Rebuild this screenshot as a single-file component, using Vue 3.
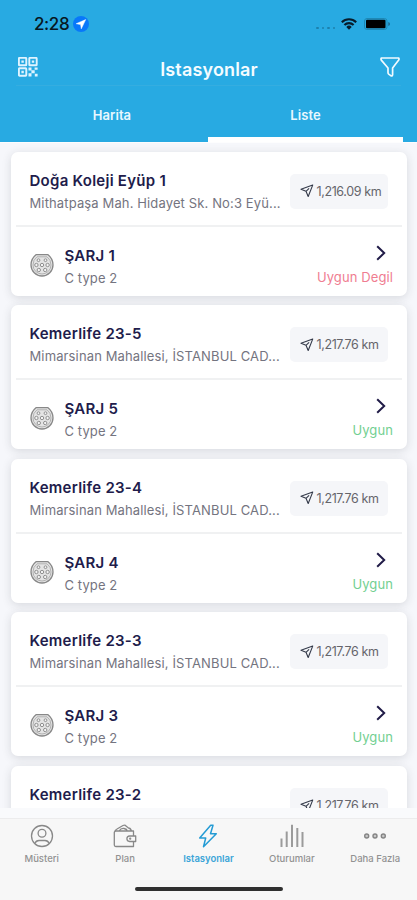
<script setup>
const stations = [
  { name: 'Doğa Koleji Eyüp 1', address: 'Mithatpaşa Mah. Hidayet Sk. No:3 Eyü...', km: '1,216.09 km', unit: 'ŞARJ 1', free: false },
  { name: 'Kemerlife 23-5', address: 'Mimarsinan Mahallesi, İSTANBUL CAD...', km: '1,217.76 km', unit: 'ŞARJ 5', free: true },
  { name: 'Kemerlife 23-4', address: 'Mimarsinan Mahallesi, İSTANBUL CAD...', km: '1,217.76 km', unit: 'ŞARJ 4', free: true },
  { name: 'Kemerlife 23-3', address: 'Mimarsinan Mahallesi, İSTANBUL CAD...', km: '1,217.76 km', unit: 'ŞARJ 3', free: true },
  { name: 'Kemerlife 23-2', km: '1,217.76 km', free: true },
]
</script>

<template>
  <div class="screen">
    <header class="header">
      <div class="status">
        <span class="time">2:28</span>
        <svg class="loc" viewBox="0 0 16 16"><circle cx="8" cy="8" r="8" fill="#0878fa" /><path d="M12.7 3.6 3.2 7.7l4.4.9.7 4.2z" fill="#fff" stroke="#fff" stroke-width=".5" stroke-linejoin="round" /></svg>
        <span class="dots"><i></i><i></i><i></i><i></i></span>
        <svg class="wifi" viewBox="0 0 16 12"><g fill="none" stroke="#071c2b" stroke-width="2.1"><path d="M.8 4.2a10.3 10.3 0 0 1 14.4 0" /><path d="M3.4 7a6.5 6.5 0 0 1 9.2 0" /></g><path d="M5.3 8.9a3.9 3.9 0 0 1 5.4 0L8 11.7z" fill="#071c2b" /></svg>
        <svg class="battery" viewBox="0 0 27 12"><rect x=".5" y=".5" width="22.5" height="11" rx="2.5" fill="none" stroke="#1e88b5" /><rect x="2" y="1.8" width="19.5" height="8.4" rx="1" fill="#000" /><path d="M24.4 4v4q1.5-.6 1.5-2t-1.500-2" fill="#1a6186" /></svg>
      </div>
      <div class="titlebar">
        <svg class="qr" viewBox="0 0 20 20">
          <g fill="none" stroke="#dff4ff" stroke-width="1.9"><rect x=".9" y=".9" width="7.4" height="7.4" rx=".6" /><rect x="11.300" y=".9" width="7.400" height="7.400" rx=".6" /><rect x=".9" y="11.300" width="7.400" height="7.400" rx=".6" /></g>
          <path fill="#dff4ff" d="M3.4 3.4h2.4v2.4H3.4zM13.8 3.4h2.4v2.4h-2.4zM3.4 13.8h2.4v2.4H3.4zM10.5 10.500h3v3h-3zM16.600 10.500h3v2.300h-3zM13.400 13.300h3.300v3h-3.300zM10.500 16.200h3v3.400h-3zM16.800 16.800h2.800v2.800h-2.800z" />
        </svg>
        <h1>Istasyonlar</h1>
        <svg class="filter" viewBox="0 0 20 20"><path d="M1.500 1h17q.9.8.2 2.100L12.600 11v6.600q-.2 1.700-1.500 1.300l-2.400-1.800q-.7-.6-.7-1.700V11L1.300 3.100Q.6 1.800 1.500 1z" fill="none" stroke="#f1faff" stroke-width="1.700" stroke-linejoin="round" /></svg>
      </div>
      <nav class="tabs">
        <div class="tab">Harita</div>
        <div class="tab on">Liste</div>
      </nav>
    </header>

    <main class="list">
      <article v-for="s in stations" :key="s.name" class="card">
        <div class="top">
          <div class="info">
            <div class="name">{{ s.name }}</div>
            <div v-if="s.address" class="address">{{ s.address }}</div>
          </div>
          <div class="distance">
            <svg viewBox="0 0 14 14"><path d="M12.700 1.100 1 5.200l5 2.100 2.200 5.200zM6 7.300l3.100-3" fill="none" stroke="#343a4a" stroke-width="1.100" stroke-linejoin="round" /></svg>
            <span>{{ s.km }}</span>
          </div>
        </div>
        <div v-if="s.unit" class="bottom">
          <svg class="plug" viewBox="0 0 24 24">
            <path d="M6 1.700h12Q23 5.500 23 12a11 11 0 0 1-22 0Q1 5.500 6 1.700z" fill="#e4e4e4" stroke="#888" stroke-width="1.300" />
            <path d="M7 3.800h10q4 3 4 8.200a9 9 0 0 1-18 0q0-5.200 4-8.200z" fill="none" stroke="#a5a5a5" stroke-width=".8" />
            <g fill="#f4f4f4" stroke="#909090" stroke-width="1"><circle cx="8.500" cy="7.200" r="1.400" /><circle cx="15.500" cy="7.200" r="1.400" /><circle cx="6.400" cy="12" r="1.700" /><circle cx="12" cy="12" r="1.700" /><circle cx="17.600" cy="12" r="1.700" /><circle cx="8.800" cy="17" r="1.700" /><circle cx="15.200" cy="17" r="1.700" /></g>
          </svg>
          <div class="unit">
            <div class="name">{{ s.unit }}</div>
            <div class="type">C type 2</div>
          </div>
          <div class="state">
            <svg viewBox="0 0 10 16"><path d="m1.200 1.200 7 6.800-7 6.800" fill="none" stroke="#211c48" stroke-width="2" /></svg>
            <span :class="s.free ? 'ok' : 'busy'">{{ s.free ? 'Uygun' : 'Uygun Degil' }}</span>
          </div>
        </div>
      </article>
    </main>

    <footer class="footer">
      <nav class="menu">
        <div class="item">
          <svg viewBox="0 0 24 24"><g fill="none" stroke="#888" stroke-width="1.300"><circle cx="12" cy="12" r="10.500" /><circle cx="12" cy="9.200" r="3.900" /><path d="M4.800 19.500q1.200-3 4.200-3h6q3 0 4.200 3" /></g></svg>
          <span>Müsteri</span>
        </div>
        <div class="item">
          <svg viewBox="0 0 24 24"><g fill="none" stroke="#888" stroke-width="1.300" stroke-linejoin="round"><path d="M20.500 12V7H3Q1.300 7 1.300 8.500v12.500q0 1.500 1.500 1.500h17.700v-5M1.500 8Q2 6 4 5l6-3.500q2-1 3.300.8L15.500 4q2 0 3 3M6 7q2-3 5-2.500t3 2.500" /><path d="M22.700 12h-6q-2.800.2-2.800 2.700t2.800 2.800h6z" /><circle cx="17.200" cy="14.700" r=".5" /></g></svg>
          <span>Plan</span>
        </div>
        <div class="item active">
          <svg viewBox="0 0 24 24"><path d="M14.700 1.200 3.700 14h6L7.500 22.700 20.300 9.800h-5.800l2.500-8.600z" fill="none" stroke="#249bd4" stroke-width="1.500" stroke-linejoin="round" /></svg>
          <span>Istasyonlar</span>
        </div>
        <div class="item">
          <svg viewBox="0 0 24 24"><path d="M1.500 14.500v8.500M6.700 7.500V23M12 .8V23M17.300 4V23M22.500 8v15" fill="none" stroke="#9b9b9b" stroke-width="2" /></svg>
          <span>Oturumlar</span>
        </div>
        <div class="item">
          <svg viewBox="0 0 24 24"><g fill="#c8c8c8" stroke="#858585" stroke-width="1.400"><circle cx="3.700" cy="12" r="2" /><circle cx="12" cy="12" r="2" /><circle cx="20.300" cy="12" r="2" /></g></svg>
          <span>Daha Fazla</span>
        </div>
      </nav>
      <div class="home"></div>
    </footer>
  </div>
</template>

<style>
body { margin: 0; overflow: hidden; }
</style>

<style scoped>
* { box-sizing: border-box; }
.screen { width: 417px; height: 900px; display: flex; flex-direction: column; overflow: hidden; background: #f5f6fa; font-family: Inter, "Noto Sans", sans-serif; }
svg { display: block; flex: none; }
.header { flex: none; height: 142px; background: #28aae2; display: flex; flex-direction: column; }
.status { height: 48px; padding: 0 26px 0 34px; display: flex; align-items: center; }
.time { font-size: 17px; line-height: 20px; font-weight: 500; color: #071722; width: 39px; letter-spacing: -.4px; }
.loc { width: 16px; height: 16px; }
.dots { display: flex; gap: 3px; margin: 8px 6px 0 auto; }
.dots i { width: 2.500px; height: 2.500px; border-radius: 50%; background: #1c80ad; }
.wifi { width: 16px; height: 12px; margin-right: 7px; }
.battery { width: 27px; height: 12px; }
.titlebar { height: 38px; margin: 0 16px; padding: 0 1px 0 2px; border-bottom: 1px solid #35ade0; display: flex; align-items: center; justify-content: space-between; }
.qr { width: 20px; height: 20px; }
.filter { width: 20px; height: 20px; }
h1 { margin: 6px 0 0; font-size: 18px; line-height: 24px; font-weight: 600; letter-spacing: .15px; color: #f5fcff; }
.tabs { height: 56px; padding: 0 14px 0 16px; display: grid; grid-template-columns: 192px 195px; }
.tab { height: 56px; padding-top: 20px; text-align: center; color: #e9f8ff; font-size: 13px; line-height: 18px; font-weight: 600; letter-spacing: .05px; }
.tab.on { border-bottom: 5px solid #fff; }
.list { flex: none; height: 666px; overflow: hidden; padding: 9.700px 10px 0 10.500px; display: flex; flex-direction: column; gap: 9.600px; background: #f6f7fb; border-top: 1px solid #fdfdfe; padding-top: 8.700px; }
.card { flex: none; height: 144px; background: #fff; border-radius: 7px; box-shadow: 0 2px 10px rgba(40, 48, 55, .15); }
.top { height: 75px; margin: 0 5px; padding: 0 14px; border-bottom: 2px solid #f0f1f2; display: flex; justify-content: space-between; }
.info { padding-top: 18px; }
.name { font-size: 15px; line-height: 22px; font-weight: 600; color: #211c4b; letter-spacing: .26px; white-space: nowrap; }
.address { font-size: 13px; line-height: 20px; color: #747480; letter-spacing: .13px; white-space: nowrap; margin-top: 1px; }
.distance { width: 98px; height: 35px; margin-top: 22px; border-radius: 5px; background: #f5f6f9; display: flex; align-items: center; padding-left: 10px; gap: 2.500px; white-space: nowrap; font-size: 12.500px; color: #65656b; letter-spacing: -.38px; }
.distance svg { width: 14px; height: 14px; }
.bottom { display: flex; height: 69px; padding: 0 14px 0 19px; }
.plug { width: 24px; height: 24px; margin-top: 26px; }
.unit { padding: 18px 0 0 11px; }
.type { font-size: 13px; line-height: 20px; color: #747480; margin-top: 1px; letter-spacing: .1px; }
.state { margin-left: auto; display: flex; flex-direction: column; align-items: flex-end; padding-top: 18px; }
.state svg { width: 10px; height: 16px; margin-right: 7px; }
.state span { font-size: 13px; line-height: 20px; margin-top: 6px; letter-spacing: .1px; }
.ok { color: #72cf91; }
.busy { color: #ef7d91; }
.footer { flex: none; height: 92px; border-top: 10px solid #f9fafc; background: #f7f7f7; }
.menu { display: grid; grid-template-columns: repeat(5, 83.400px); height: 69px; border-top: 1px solid #ececed; }
.item { display: flex; flex-direction: column; align-items: center; padding-top: 5px; color: #929292; font-size: 9.500px; line-height: 12px; font-weight: 500; }
.item svg { width: 24px; height: 24px; margin-bottom: 5px; }
.item.active { color: #3ba5d8; font-weight: 600; }
.home { width: 148px; height: 4px; margin: 0 auto; border-radius: 2px; background: #303030; }
</style>
